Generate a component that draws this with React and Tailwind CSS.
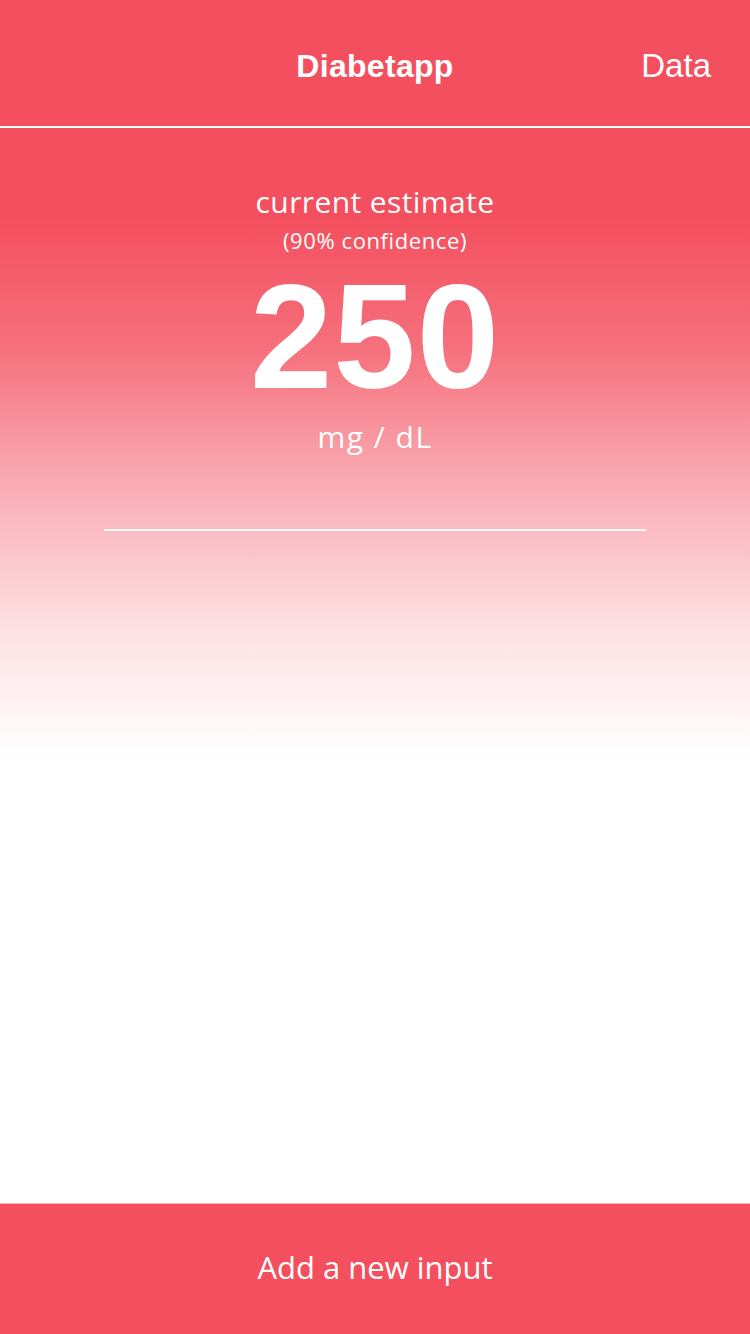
export default function App() {
    return (
        <div className="w-[750px] h-[1334px] flex flex-col bg-white overflow-hidden">
            {/* nav bar */}
            <div className="h-[128px] shrink-0 bg-[#F44F5E] border-b-2 border-white flex items-center relative pt-[6px]">
                <div className="flex-1 text-center text-white text-[32px] tracking-[0.3px] font-semibold font-['Liberation_Sans',sans-serif]">
                    Diabetapp
                </div>
                <div className="absolute right-[39px] top-0 h-full pt-[6px] flex items-center text-white text-[33px] font-['Liberation_Sans',sans-serif]">
                    Data
                </div>
            </div>

            {/* estimate */}
            <div className="flex-1 flex flex-col items-center text-white font-['Open_Sans',sans-serif] bg-[linear-gradient(to_bottom,#F44F5E_90px,#F5707C_220px,#F9A9B1_350px,#FDE0E3_500px,#FFFFFF_630px)]">
                <div className="mt-[57px] text-[30px] leading-[34px] tracking-[0.4px]">current estimate</div>
                <div className="mt-[9px] text-[22px] leading-[24px] tracking-[0.6px]">(90% confidence)</div>
                <div className="mt-[12px] text-[148px] leading-[146px] tracking-[1px] font-bold font-['Liberation_Sans',sans-serif]">250</div>
                <div className="mt-[10px] text-[30px] leading-[34px] tracking-[1.5px]">mg / dL</div>
                <div className="mt-[75px] w-[542px] h-[2px] bg-white/90"></div>
            </div>

            {/* bottom button */}
            <div className="h-[131px] shrink-0 bg-[#F44F5E] border-t border-[#F7B3B9] flex items-center justify-center pb-[4px] text-white text-[31px] font-['Open_Sans',sans-serif]">
                Add a new input
            </div>
        </div>
    );
}
